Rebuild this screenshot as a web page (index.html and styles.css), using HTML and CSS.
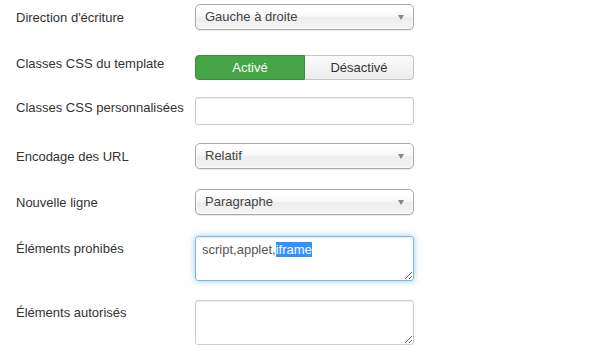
FILE: index.html
```html
<!DOCTYPE html>
<html lang="fr">

<head>
    <meta charset="UTF-8">
    <meta name="viewport" content="width=device-width, initial-scale=1.0">
    <title>Paramètres de l'éditeur</title>
    <link rel="stylesheet" href="styles.css">
</head>

<body>
    <form class="form-horizontal">
        <div class="control-group row-select">
            <div class="control-label">Direction d'écriture</div>
            <div class="controls">
                <div class="chzn-single"><span>Gauche à droite</span><b></b></div>
            </div>
        </div>

        <div class="control-group row-toggle">
            <div class="control-label">Classes CSS du template</div>
            <div class="controls">
                <div class="btn-group">
                    <div class="btn btn-success">Activé</div>
                    <div class="btn">Désactivé</div>
                </div>
            </div>
        </div>

        <div class="control-group row-input">
            <div class="control-label">Classes CSS personnalisées</div>
            <div class="controls">
                <div class="input-text"></div>
            </div>
        </div>

        <div class="control-group row-select">
            <div class="control-label">Encodage des URL</div>
            <div class="controls">
                <div class="chzn-single"><span>Relatif</span><b></b></div>
            </div>
        </div>

        <div class="control-group row-select">
            <div class="control-label">Nouvelle ligne</div>
            <div class="controls">
                <div class="chzn-single"><span>Paragraphe</span><b></b></div>
            </div>
        </div>

        <div class="control-group row-area">
            <div class="control-label">Éléments prohibés</div>
            <div class="controls">
                <div class="textarea focus">script,applet,<span class="selected">iframe</span></div>
            </div>
        </div>

        <div class="control-group row-area">
            <div class="control-label">Éléments autorisés</div>
            <div class="controls">
                <div class="textarea"></div>
            </div>
        </div>
    </form>
</body>

</html>
```

FILE: styles.css
```css
*,
*::before,
*::after {
    box-sizing: border-box;
    margin: 0;
    padding: 0;
}

body {
    background: #fff;
    font-family: "Liberation Sans", Arial, sans-serif;
    font-size: 13px;
    line-height: 18px;
    color: #333;
    padding: 4px 0 0 16px;
}

.control-group {
    display: flex;
    align-items: flex-start;
}

.control-label {
    width: 179px;
    padding-top: 5px;
}

.controls {
    width: 219px;
}

.row-select {
    margin-bottom: 20px;
}

.row-toggle {
    margin-bottom: 14px;
}

.row-input {
    margin-bottom: 18px;
}

.row-area {
    margin-bottom: 18px;
}

/* chosen style select */
.chzn-single {
    position: relative;
    height: 26px;
    padding: 3px 0 0 9px;
    border: 1px solid #aaa;
    border-radius: 5px;
    background: linear-gradient(#fff 20%, #f6f6f6 50%, #eee 52%, #f4f4f4 100%);
    box-shadow: 0 0 3px #fff inset, 0 1px 1px rgba(0, 0, 0, 0.1);
    color: #444;
}

.chzn-single b {
    position: absolute;
    right: 9px;
    top: 10px;
    width: 0;
    height: 0;
    border-left: 3.5px solid transparent;
    border-right: 3.5px solid transparent;
    border-top: 5px solid #888;
}

.btn-group {
    display: flex;
    margin-top: 5px;
    height: 25px;
}

.btn {
    flex: 1;
    text-align: center;
    padding-top: 3px;
    font-size: 13px;
    color: #333;
    border: 1px solid #c4c4c4;
    border-left: 0;
    border-radius: 0 4px 4px 0;
    background: linear-gradient(#fbfbfb, #ececec);
}

.btn-success {
    flex: 0 0 110px;
    color: #fff;
    border: 1px solid #3d8b3d;
    border-radius: 4px 0 0 4px;
    background: #46a546;
}

.input-text {
    margin-top: 3px;
    height: 28px;
    border: 1px solid #ccc;
    border-radius: 3px;
    box-shadow: inset 0 1px 1px rgba(0, 0, 0, 0.075);
}

.textarea {
    margin-top: 1px;
    height: 45px;
    padding: 4px 6px;
    border: 1px solid #ccc;
    border-radius: 3px;
    box-shadow: inset 0 1px 1px rgba(0, 0, 0, 0.075);
    overflow: auto;
    resize: both;
    color: #555;
}

.textarea.focus {
    border-color: rgba(82, 168, 236, 0.8);
    box-shadow: inset 0 1px 1px rgba(0, 0, 0, 0.075), 0 0 6px rgba(82, 168, 236, 0.6);
}

.selected {
    background: #3390ff;
    color: #fff;
}
```
